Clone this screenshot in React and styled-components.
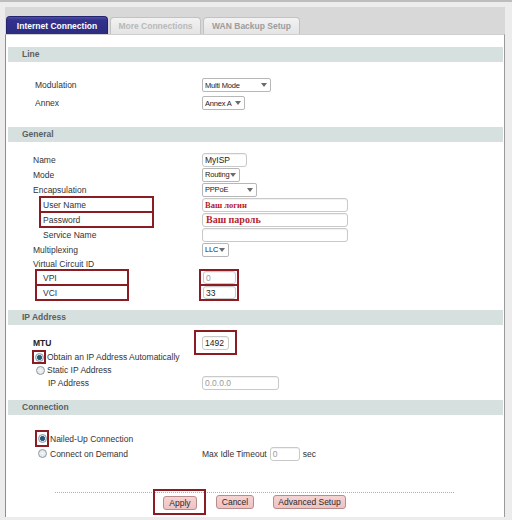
import React from "react";
import styled, { createGlobalStyle } from "styled-components";

const Global = createGlobalStyle`
  html, body { margin: 0; padding: 0; background: #ececec; }
  body { font-family: "Liberation Sans", Tahoma, Arial, sans-serif; font-size: 8.5px; color: #333; }
  * { box-sizing: border-box; }
`;

const Page = styled.div`
  width: 512px;
  height: 520px;
  background: #ececec;
  border-top: 2px solid #bdbdbd;
  padding: 5px 7px 3px 5px;
`;

const Frame = styled.div`
  height: 100%;
  background: #d8d8d8;
  display: flex;
  flex-direction: column;
`;

const TabBar = styled.div`
  height: 27px;
  display: flex;
  align-items: flex-end;
  gap: 2px;
  padding-left: 1px;
`;

const Tab = styled.div`
  width: ${(p) => p.$w}px;
  height: ${(p) => (p.$active ? 18 : 17)}px;
  display: flex;
  align-items: center;
  justify-content: center;
  font-weight: bold;
  font-size: 8.5px;
  border-radius: 4px 4px 0 0;
  color: ${(p) => (p.$active ? "#fff" : p.$color)};
  background: ${(p) =>
    p.$active ? "linear-gradient(#4f4fa8 0, #33338d 3px, #2c2c82 100%)" : "linear-gradient(#f2f2f2, #e4e4e4)"};
  border: 1px solid ${(p) => (p.$active ? "#24246e" : "#c2c2c2")};
  border-bottom: none;
`;

const Panel = styled.div`
  flex: 1;
  background: #fff;
  border-left: 1px solid #8e8e8e;
  border-right: 1px solid #9a9a9a;
  border-top: 1px solid #cfcfcf;
  display: flex;
  flex-direction: column;
`;

const SectionHeader = styled.div`
  margin: ${(p) => p.$top}px 1px 0 2px;
  height: 15px;
  line-height: 15px;
  background: #d6e0df;
  padding-left: 14px;
  font-weight: bold;
  color: #5a5f62;
  font-size: 8.5px;
`;

const SectionBody = styled.div`
  padding-top: ${(p) => p.$top}px;
  display: flex;
  flex-direction: column;
  gap: ${(p) => p.$gap || 0}px;
`;

const Row = styled.div`
  display: grid;
  grid-template-columns: 196px 1fr;
  grid-template-rows: ${(p) => p.$h || 15}px;
  align-items: center;
  height: ${(p) => p.$h || 15}px;
`;

const Label = styled.div`
  padding-left: ${(p) => p.$indent || 0}px;
  display: flex;
  align-items: center;
  white-space: nowrap;
  font-weight: ${(p) => (p.$bold ? "bold" : "normal")};
  color: ${(p) => (p.$bold ? "#222" : "#333")};
`;

const Mark = styled.span`
  display: inline-flex;
  align-items: center;
  height: 17px;
  margin: -1px 0 -1px ${(p) => p.$x}px;
  width: ${(p) => p.$w}px;
  padding-left: ${(p) => p.$pad}px;
  border: 2px solid #8b1c24;
`;

const MarkBox = styled.span`
  display: inline-flex;
  align-items: center;
  border: 2px solid #8b1c24;
  width: ${(p) => p.$w}px;
  height: ${(p) => p.$h}px;
  margin: ${(p) => p.$my}px 0 ${(p) => p.$my}px ${(p) => p.$x}px;
  padding-left: ${(p) => p.$pad}px;
`;

const Control = styled.div`
  display: flex;
  align-items: center;
  gap: 3px;
  white-space: nowrap;
`;

const Select = styled.div`
  width: ${(p) => p.$w}px;
  height: 14px;
  border: 1px solid #b7b7b7;
  border-radius: 2px;
  background: #fff;
  display: flex;
  align-items: center;
  justify-content: space-between;
  padding: 0 3px 0 2px;
  font-size: 7.5px;
  letter-spacing: -0.2px;
  color: #222;
`;

const Input = styled.div`
  width: ${(p) => p.$w}px;
  height: ${(p) => p.$h || 14}px;
  border: 1px solid #c9c9c9;
  border-radius: 3px;
  background: #fff;
  box-shadow: inset 0 1px 1px rgba(0, 0, 0, 0.06);
  display: flex;
  align-items: center;
  padding-left: 2px;
  font-size: 8.5px;
  color: ${(p) => (p.$muted ? "#9a9a9a" : "#222")};
`;

const RedText = styled.span`
  font-family: "Liberation Serif", "Times New Roman", serif;
  font-weight: bold;
  color: #b5242c;
  font-size: ${(p) => p.$size}px;
  margin-left: ${(p) => p.$x || 0}px;
`;

const RadioDot = styled.span`
  display: inline-block;
  width: 9px;
  height: 9px;
  border-radius: 50%;
  border: 1px solid #8d9aa3;
  background: ${(p) =>
    p.$checked
      ? "radial-gradient(circle, #24536f 0, #2d6180 2.2px, #cfe0ea 2.8px, #e9eff3 100%)"
      : "radial-gradient(circle, #f4f6f7 0, #d9dfe3 100%)"};
  flex-shrink: 0;
`;

const RadioMark = styled.span`
  display: inline-flex;
  align-items: center;
  justify-content: center;
  width: 14px;
  height: ${(p) => p.$h}px;
  margin: ${(p) => p.$my}px 1px ${(p) => p.$my}px 0;
  border: 2px solid #8b1c24;
`;

const RadioLabel = styled.div`
  padding-left: ${(p) => p.$indent}px;
  display: flex;
  align-items: center;
  gap: ${(p) => p.$gap}px;
  white-space: nowrap;
`;

const Footer = styled.div`
  margin: 31px 50px 0 49px;
  border-top: 1px dotted #b0b0b0;
`;

const ButtonRow = styled.div`
  display: flex;
  align-items: center;
  margin-top: -4px;
  padding-left: 98px;
  gap: 10px;
`;

const ButtonMark = styled.div`
  border: 2px solid #8b1c24;
  padding: 5px 7px 3px 8px;
  display: flex;
`;

const Button = styled.div`
  width: ${(p) => p.$w}px;
  height: 14px;
  display: flex;
  align-items: center;
  justify-content: center;
  background: linear-gradient(#f6d3d3, #efc2c2);
  border: 1px solid #b98c8c;
  border-radius: 3px;
  font-size: 8.5px;
  color: #2a2a2a;
  margin-left: ${(p) => p.$ml || 0}px;
`;

const Arrow = () => (
  <svg width="6" height="4" viewBox="0 0 6 4">
    <path d="M0 0 L6 0 L3 4 Z" fill="#6a6a6a" />
  </svg>
);

const Sel = ({ w, children }) => (
  <Select $w={w}>
    <span>{children}</span>
    <Arrow />
  </Select>
);

export default function App() {
  return (
    <>
      <Global />
      <Page>
        <Frame>
          <TabBar>
            <Tab $active $w={102}>Internet Connection</Tab>
            <Tab $w={91} $color="#b9b9b9">More Connections</Tab>
            <Tab $w={97} $color="#9c9c9c">WAN Backup Setup</Tab>
          </TabBar>
          <Panel>
            <SectionHeader $top={12}>Line</SectionHeader>
            <SectionBody $top={16} $gap={4}>
              <Row $h={14}>
                <Label $indent={29}>Modulation</Label>
                <Control>
                  <Sel w={69}>Multi Mode</Sel>
                </Control>
              </Row>
              <Row $h={14}>
                <Label $indent={29}>Annex</Label>
                <Control>
                  <Sel w={43}>Annex A</Sel>
                </Control>
              </Row>
            </SectionBody>

            <SectionHeader $top={17}>General</SectionHeader>
            <SectionBody $top={10}>
              <Row>
                <Label $indent={27}>Name</Label>
                <Control>
                  <Input $w={45}>MyISP</Input>
                </Control>
              </Row>
              <Row>
                <Label $indent={27}>Mode</Label>
                <Control>
                  <Sel w={38}>Routing</Sel>
                </Control>
              </Row>
              <Row>
                <Label $indent={27}>Encapsulation</Label>
                <Control>
                  <Sel w={55}>PPPoE</Sel>
                </Control>
              </Row>
              <Row>
                <Label>
                  <Mark $x={33} $w={115} $pad={2}>User Name</Mark>
                </Label>
                <Control>
                  <Input $w={146}>
                    <RedText $size={8.5}>Ваш логин</RedText>
                  </Input>
                </Control>
              </Row>
              <Row>
                <Label>
                  <Mark $x={33} $w={115} $pad={2}>Password</Mark>
                </Label>
                <Control>
                  <Input $w={146}>
                    <RedText $size={10} $x={1}>Ваш пароль</RedText>
                  </Input>
                </Control>
              </Row>
              <Row>
                <Label $indent={37}>Service Name</Label>
                <Control>
                  <Input $w={146} />
                </Control>
              </Row>
              <Row>
                <Label $indent={27}>Multiplexing</Label>
                <Control>
                  <Sel w={27}>LLC</Sel>
                </Control>
              </Row>
              <Row $h={13}>
                <Label $indent={27}>Virtual Circuit ID</Label>
                <div />
              </Row>
              <Row>
                <Label>
                  <Mark $x={29} $w={94} $pad={6}>VPI</Mark>
                </Label>
                <Control>
                  <MarkBox $x={-3} $my={-1} $w={40} $h={17} $pad={2}>
                    <Input $w={33} $h={13} $muted>0</Input>
                  </MarkBox>
                </Control>
              </Row>
              <Row>
                <Label>
                  <Mark $x={29} $w={94} $pad={6}>VCI</Mark>
                </Label>
                <Control>
                  <MarkBox $x={-3} $my={-1} $w={40} $h={17} $pad={2}>
                    <Input $w={33} $h={13}>33</Input>
                  </MarkBox>
                </Control>
              </Row>
            </SectionBody>

            <SectionHeader $top={10}>IP Address</SectionHeader>
            <SectionBody $top={10}>
              <Row>
                <Label $indent={27} $bold>MTU</Label>
                <Control>
                  <MarkBox $x={-8} $my={-5} $w={43} $h={25} $pad={6}>
                    <Input $w={27} $h={14}>1492</Input>
                  </MarkBox>
                </Control>
              </Row>
              <Row $h={14}>
                <RadioLabel $indent={26} $gap={0}>
                  <RadioMark $my={0} $h={14}>
                    <RadioDot $checked />
                  </RadioMark>
                  Obtain an IP Address Automatically
                </RadioLabel>
                <div />
              </Row>
              <Row $h={12}>
                <RadioLabel $indent={30} $gap={2}>
                  <RadioDot />
                  Static IP Address
                </RadioLabel>
                <div />
              </Row>
              <Row $h={13}>
                <Label $indent={42}>IP Address</Label>
                <Control>
                  <Input $w={77} $muted>0.0.0.0</Input>
                </Control>
              </Row>
            </SectionBody>

            <SectionHeader $top={11}>Connection</SectionHeader>
            <SectionBody $top={16}>
              <Row>
                <RadioLabel $indent={29} $gap={0}>
                  <RadioMark $my={-1} $h={17}>
                    <RadioDot $checked />
                  </RadioMark>
                  Nailed-Up Connection
                </RadioLabel>
                <div />
              </Row>
              <Row>
                <RadioLabel $indent={32} $gap={3}>
                  <RadioDot />
                  Connect on Demand
                </RadioLabel>
                <Control>
                  <span>Max Idle Timeout</span>
                  <Input $w={30} $muted>0</Input>
                  <span>sec</span>
                </Control>
              </Row>
            </SectionBody>

            <Footer>
              <ButtonRow>
                <ButtonMark>
                  <Button $w={34}>Apply</Button>
                </ButtonMark>
                <Button $w={38}>Cancel</Button>
                <Button $w={73} $ml={9}>Advanced Setup</Button>
              </ButtonRow>
            </Footer>
          </Panel>
        </Frame>
      </Page>
    </>
  );
}
